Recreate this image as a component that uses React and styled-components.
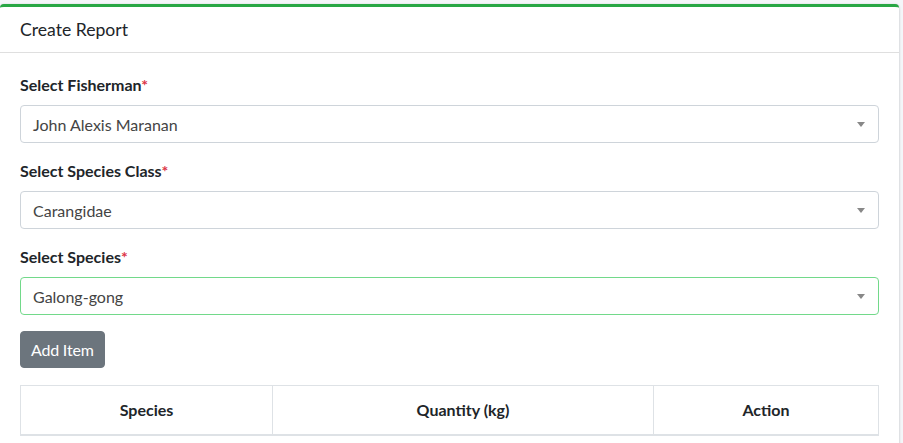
import React from "react";
import styled, { createGlobalStyle } from "styled-components";

const GlobalStyle = createGlobalStyle`
  html, body {
    margin: 0;
    padding: 0;
    background: #f4f6f9;
    font-family: "Lato", "Liberation Sans", sans-serif;
    color: #212529;
    overflow: hidden;
  }
`;

const Page = styled.div`
  padding-top: 4px;
  width: 899px;
`;

const Card = styled.div`
  background: #fff;
  border-top: 3px solid #28a745;
  border-radius: 4px;
  box-shadow: 0 0 1px rgba(0, 0, 0, 0.125), 0 1px 3px rgba(0, 0, 0, 0.2);
`;

const CardHeader = styled.div`
  padding: 12px 20px;
  border-bottom: 1px solid rgba(0, 0, 0, 0.125);
`;

const CardTitle = styled.h3`
  margin: 0;
  font-size: 17.6px;
  font-weight: 400;
  line-height: 1.2;
`;

const CardBody = styled.div`
  padding: 20px;
`;

const FormGroup = styled.div`
  margin-bottom: 16px;
`;

const Label = styled.label`
  display: block;
  margin-bottom: 8px;
  font-size: 16px;
  font-weight: 700;
  line-height: 24px;
`;

const Required = styled.span`
  color: #dc3545;
`;

const SelectBox = styled.div`
  display: flex;
  align-items: center;
  justify-content: space-between;
  height: 38px;
  box-sizing: border-box;
  padding: 0 12px;
  border: 1px solid ${(p) => (p.$valid ? "#72d98a" : "#ced4da")};
  border-radius: 4px;
  font-size: 16px;
  color: #444;
`;

const Caret = styled.span`
  width: 0;
  height: 0;
  margin-right: 1px;
  border-left: 4px solid transparent;
  border-right: 4px solid transparent;
  border-top: 5px solid #888;
`;

const Button = styled.button`
  display: block;
  padding: 6px 10px;
  height: 37px;
  border: 1px solid #6c757d;
  border-radius: 4px;
  background: #6c757d;
  color: #fff;
  font-family: inherit;
  font-size: 16px;
  line-height: 24px;
  letter-spacing: -0.2px;
`;

const Table = styled.table`
  margin-top: 17px;
  width: 100%;
  table-layout: fixed;
  border-collapse: collapse;
  font-size: 16px;
`;

const Th = styled.th`
  box-sizing: border-box;
  width: ${(p) => p.$w || "auto"};
  padding: 12px;
  border: 1px solid #dee2e6;
  border-bottom-width: 2px;
  text-align: center;
  font-weight: 700;
  line-height: 24px;
`;

const fields = [
  { label: "Select Fisherman", value: "John Alexis Maranan" },
  { label: "Select Species Class", value: "Carangidae" },
  { label: "Select Species", value: "Galong-gong", valid: true },
];

export default function App() {
  return (
    <Page>
      <GlobalStyle />
      <Card>
        <CardHeader>
          <CardTitle>Create Report</CardTitle>
        </CardHeader>
        <CardBody>
          {fields.map((f) => (
            <FormGroup key={f.label}>
              <Label>
                {f.label}
                <Required>*</Required>
              </Label>
              <SelectBox $valid={f.valid}>
                <span>{f.value}</span>
                <Caret />
              </SelectBox>
            </FormGroup>
          ))}
          <Button>Add Item</Button>
          <Table>
            <thead>
              <tr>
                <Th $w="252px">Species</Th>
                <Th $w="381px">Quantity (kg)</Th>
                <Th>Action</Th>
              </tr>
            </thead>
          </Table>
        </CardBody>
      </Card>
    </Page>
  );
}
